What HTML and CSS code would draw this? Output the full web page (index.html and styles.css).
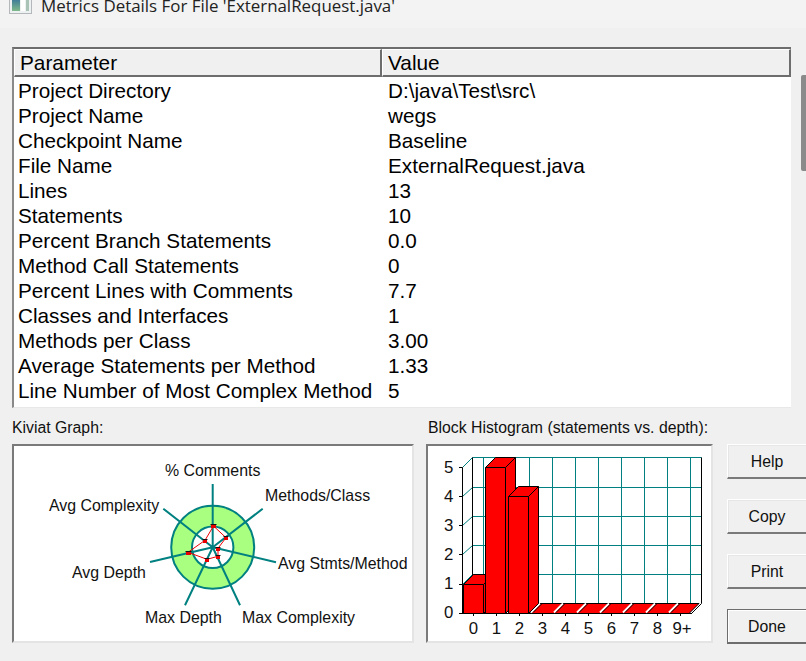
FILE: index.html
```html
<!DOCTYPE html>
<html lang="en">
<head>
<meta charset="utf-8">
<title>Metrics Details</title>
<link rel="stylesheet" href="styles.css">
</head>
<body>
<div class="window">
  <header class="titlebar">
    <svg class="appicon" width="23" height="14" viewBox="0 0 23 14">
      <defs>
        <linearGradient id="ig" x1="0" y1="0" x2="0" y2="1">
          <stop offset="0" stop-color="#2f6f9c"/>
          <stop offset="1" stop-color="#7fb98a"/>
        </linearGradient>
      </defs>
      <rect x="0.5" y="-3" width="22" height="16.5" fill="#eef1f2" stroke="#b4b8ba"/>
      <rect x="3" y="-3" width="8" height="14" fill="url(#ig)"/>
      <rect x="12" y="-3" width="4" height="14" fill="#ffffff"/>
      <rect x="17" y="-3" width="3" height="14" fill="#a9c3b6"/>
    </svg>
    <span class="title">Metrics Details For File 'ExternalRequest.java'</span>
  </header>
  <section class="listarea">
    <div class="list">
      <div class="row head">
        <div class="hcell c1">Parameter</div>
        <div class="hcell c2">Value</div>
      </div>
      <div class="rows">
        <div class="row"><div class="c1 cell">Project Directory</div><div class="c2 cell">D:\java\Test\src\</div></div>
        <div class="row"><div class="c1 cell">Project Name</div><div class="c2 cell">wegs</div></div>
        <div class="row"><div class="c1 cell">Checkpoint Name</div><div class="c2 cell">Baseline</div></div>
        <div class="row"><div class="c1 cell">File Name</div><div class="c2 cell">ExternalRequest.java</div></div>
        <div class="row"><div class="c1 cell">Lines</div><div class="c2 cell">13</div></div>
        <div class="row"><div class="c1 cell">Statements</div><div class="c2 cell">10</div></div>
        <div class="row"><div class="c1 cell">Percent Branch Statements</div><div class="c2 cell">0.0</div></div>
        <div class="row"><div class="c1 cell">Method Call Statements</div><div class="c2 cell">0</div></div>
        <div class="row"><div class="c1 cell">Percent Lines with Comments</div><div class="c2 cell">7.7</div></div>
        <div class="row"><div class="c1 cell">Classes and Interfaces</div><div class="c2 cell">1</div></div>
        <div class="row"><div class="c1 cell">Methods per Class</div><div class="c2 cell">3.00</div></div>
        <div class="row"><div class="c1 cell">Average Statements per Method</div><div class="c2 cell">1.33</div></div>
        <div class="row"><div class="c1 cell">Line Number of Most Complex Method</div><div class="c2 cell">5</div></div>
      </div>
    </div>
    <div class="scrollbar"><div class="thumb"></div></div>
  </section>
  <section class="bottom">
    <div class="group kiviat">
      <div class="caption">Kiviat Graph:</div>
      <div class="panel">
        <svg class="chart" width="398" height="195" viewBox="14 446 398 195">
          <g class="spokes">
            <circle cx="212.7" cy="547.3" r="41.5" fill="#a8ff80" stroke="#008080" stroke-width="2"/>
            <circle cx="212.7" cy="547.3" r="20.7" fill="#fff" stroke="#008080" stroke-width="2"/>
            <path d="M212.7 547.3V484M212.7 547.3L262.7 508.7M212.7 547.3L276 562.3M212.7 547.3L240 605.3M212.7 547.3L185 605.3M212.7 547.3L150 562M212.7 547.3L163.3 508.7" fill="none" stroke="#008080" stroke-width="2"/>
          </g>
          <path d="M213.5 526L226 537.7L218 548.3L218 556.3L207 559.3L188 552.3L205 540.3Z" fill="none" stroke="#f00000" stroke-width="1"/>
          <g class="marks">
            <rect x="211" y="525" width="5" height="3"/><rect x="224" y="537" width="4" height="3"/><rect x="216" y="548" width="4" height="3"/><rect x="216" y="556" width="4" height="3"/><rect x="205" y="559" width="4" height="3"/><rect x="186" y="552" width="5" height="3"/><rect x="203" y="540" width="4" height="3"/>
          </g>
          <path class="marktop" d="M210.5 524.5H216.5M223.5 536.5H228.5M215.5 547.5H220.5M215.5 555.5H220.5M204.5 558.5H209.5M185.5 551.5H191.5M202.5 539.5H207.5"/>
          <g class="lbl">
            <text x="165" y="476">% Comments</text>
            <text x="265" y="501">Methods/Class</text>
            <text x="49" y="511">Avg Complexity</text>
            <text x="278" y="569">Avg Stmts/Method</text>
            <text x="72" y="578">Avg Depth</text>
            <text x="145" y="623">Max Depth</text>
            <text x="242" y="623">Max Complexity</text>
          </g>
        </svg>
      </div>
    </div>
    <div class="group hist">
      <div class="caption">Block Histogram (statements vs. depth):</div>
      <div class="panel">
        <svg class="chart" width="283" height="195" viewBox="428 446 283 195">
          <path class="grid" d="M472.5 457.5H701.5M472.5 487.5H701.5M472.5 516.5H701.5M472.5 545.5H701.5M472.5 574.5H701.5M483.5 457.5V603.5M506.5 457.5V603.5M529.5 457.5V603.5M552.5 457.5V603.5M575.5 457.5V603.5M598.5 457.5V603.5M621.5 457.5V603.5M644.5 457.5V603.5M667.5 457.5V603.5M690.5 457.5V603.5M462.5 467.5L472.5 457.5M462.5 496.5L472.5 487.5M462.5 525.5L472.5 516.5M462.5 554.5L472.5 545.5M462.5 584.5L472.5 574.5"/>
          <path class="axis" d="M472.5 457.5V584M701.5 457.5V603.5L691.5 613.5M462.5 467.5V613.5M459 467.5H462.5M459 496.5H462.5M459 525.5H462.5M459 554.5H462.5M459 584.5H462.5M459 613.5H692M473.5 613.5V616M496.5 613.5V616M519.5 613.5V616M542.5 613.5V616M565.5 613.5V616M588.5 613.5V616M611.5 613.5V616M634.5 613.5V616M657.5 613.5V616M680.5 613.5V616"/>
          <g class="flats">
            <path d="M530 613.5L540 603.5H699L689 613.5Z"/>
            <path class="gap" d="M531 612.5L540 603.5M554 612.5L563 603.5M577 612.5L586 603.5M600 612.5L609 603.5M623 612.5L632 603.5M646 612.5L655 603.5M669 612.5L678 603.5"/>
            <path class="gapline" d="M533 612.5L542 603.5M556 612.5L565 603.5M579 612.5L588 603.5M602 612.5L611 603.5M625 612.5L634 603.5M648 612.5L657 603.5M671 612.5L680 603.5"/>
          </g>
          <g class="bars">
            <path d="M463.5 584.5L473.5 574.5H493.5V603.5L483.5 613.5H463.5Z"/>
            <path class="edge" d="M463.5 584.5H483.5L493.5 574.5M483.5 584.5V613.5"/>
            <path d="M485.5 467.5L495.5 457.5H515.5V603.5L505.5 613.5H485.5Z"/>
            <path class="edge" d="M485.5 467.5H505.5L515.5 457.5M505.5 467.5V613.5"/>
            <path d="M508.5 496.5L518.5 486.5H538.5V603.5L528.5 613.5H508.5Z"/>
            <path class="edge" d="M508.5 496.5H528.5L538.5 486.5M528.5 496.5V613.5"/>
          </g>
          <g class="num ynum">
            <text x="444" y="473">5</text><text x="444" y="502">4</text><text x="444" y="531">3</text><text x="444" y="560">2</text><text x="444" y="589">1</text><text x="444" y="618">0</text>
          </g>
          <g class="num xnum">
            <text x="473.5" y="634">0</text><text x="496.5" y="634">1</text><text x="519.5" y="634">2</text><text x="542.5" y="634">3</text><text x="565.5" y="634">4</text><text x="588.5" y="634">5</text><text x="611.5" y="634">6</text><text x="634.5" y="634">7</text><text x="657.5" y="634">8</text><text x="682" y="634">9+</text>
          </g>
        </svg>
      </div>
    </div>
    <div class="buttons">
      <button class="btn">Help</button>
      <button class="btn">Copy</button>
      <button class="btn">Print</button>
      <button class="btn default">Done</button>
    </div>
  </section>
</div>
</body>
</html>
```
FILE: styles.css
```css
* { box-sizing: border-box; }
html, body { margin: 0; padding: 0; }
body { width: 806px; height: 661px; overflow: hidden; background: #f0f0f0; font-family: "Liberation Sans", Arial, sans-serif; color: #000; }
.window { display: flex; flex-direction: column; height: 661px; }
.titlebar { height: 28px; background: #f3f3f3; display: flex; align-items: flex-start; padding-left: 9px; gap: 9px; flex: none; }
.appicon { flex: none; }
.title { font-family: "Open Sans", sans-serif; font-size: 16.9px; line-height: 11px; color: #222; white-space: nowrap; }
.listarea { display: flex; padding: 19px 0 0 12px; height: 380px; flex: none; }
.list { width: 779px; background: #fff; border-top: 2px solid #6d6d6d; border-left: 2px solid #8a8a8a; border-bottom: 1px solid #e8e8e8; display: flex; flex-direction: column; }
.row { display: flex; }
.head { height: 28px; flex: none; }
.hcell { background: #f0f0f0; font-size: 20.8px; line-height: 24px; border-top: 1px solid #fff; border-left: 1px solid #fff; border-right: 2px solid #6d6d6d; border-bottom: 2px solid #6d6d6d; padding: 1px 0 0 5px; }
.hcell.c1 { width: 368px; }
.hcell.c2 { width: 409px; }
.rows { padding-top: 1px; }
.cell { font-size: 20.7px; line-height: 25px; white-space: nowrap; }
.cell.c1 { width: 368px; padding-left: 4px; }
.cell.c2 { padding-left: 6px; }
.scrollbar { width: 15px; background: #f0f0f0; padding-top: 28px; display: flex; justify-content: flex-end; }
.thumb { width: 5px; height: 96px; background: #8a8a8a; border-radius: 2px 0 0 2px; }
.bottom { display: flex; padding: 11px 0 0 12px; }
.group { display: flex; flex-direction: column; }
.kiviat { width: 402px; margin-right: 12px; }
.hist { width: 287px; margin-right: 14px; }
.caption { font-size: 15.8px; line-height: 16px; height: 25px; padding-top: 1px; color: #111; white-space: nowrap; }
.hist .caption { margin-left: 2px; }
.panel { height: 199px; background: #fff; border-top: 2px solid #7a7a7a; border-left: 2px solid #7a7a7a; border-right: 2px solid #e4e4e4; border-bottom: 2px solid #e4e4e4; }
.chart { display: block; }
.marks rect { fill: #e80000; stroke: none; }
.marktop { fill: none; stroke: #111; stroke-width: 1; }
.lbl text { font-size: 15.9px; fill: #111; }
.grid { fill: none; stroke: #008080; stroke-width: 1; }
.axis { fill: none; stroke: #000; stroke-width: 1; }
.bars path { fill: #ff0000; stroke: #000; stroke-width: 1; }
.bars .edge { fill: none; }
.flats path { fill: #ff0000; stroke: #000; stroke-width: 1; }
.flats .gap { fill: none; stroke: #fff; stroke-width: 2; }
.flats .gapline { fill: none; stroke: #000; stroke-width: 1; }
.num text { font-size: 16.8px; fill: #111; }
.xnum text { text-anchor: middle; }
.buttons { display: flex; flex-direction: column; gap: 20px; padding-top: 25px; width: 79px; flex: none; }
.btn { height: 35px; width: 79px; padding: 2px 0 0; font-family: "Liberation Sans", Arial, sans-serif; font-size: 15.8px; color: #111; background: #f0f0f0; border: 0; border-top: 1px solid #fff; border-left: 1px solid #fff; border-bottom: 2px solid #7a7a7a; box-shadow: inset 1px 1px 0 #e6e6e6; }
.btn.default { border-top: 1px solid #6d6d6d; border-left: 1px solid #6d6d6d; border-bottom: 2px solid #6d6d6d; box-shadow: inset 1px 1px 0 #fff; }
```
